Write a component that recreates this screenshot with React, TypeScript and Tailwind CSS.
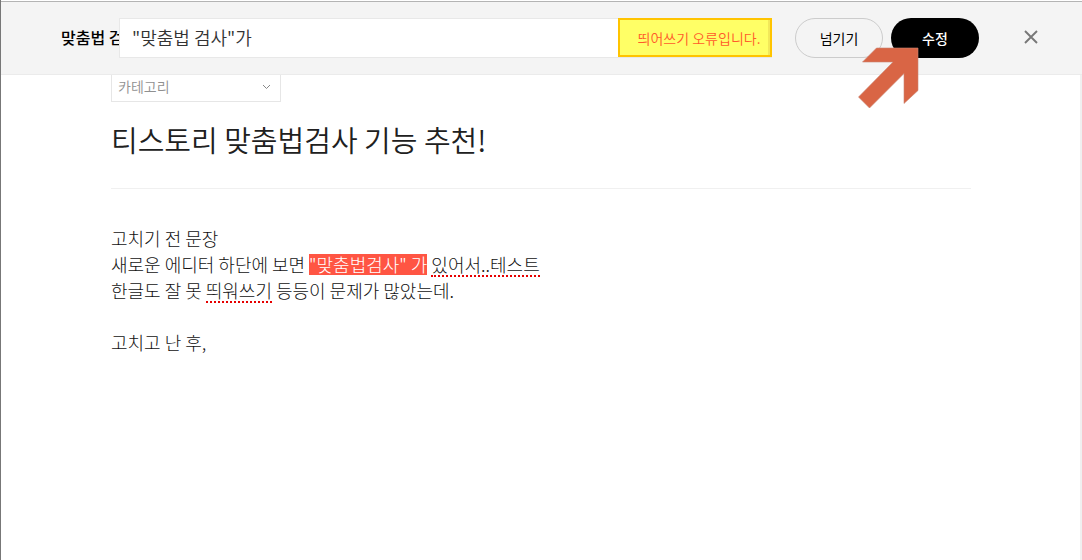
import React from "react";

function CloseIcon() {
  return (
    <svg width="14" height="14" viewBox="0 0 14 14" fill="none" aria-hidden="true">
      <path d="M1 1L13 13M13 1L1 13" stroke="#777" strokeWidth="1.9" />
    </svg>
  );
}

function PointerArrow() {
  return (
    <svg
      className="pointer-events-none absolute -left-[34px] top-[29px]"
      width="63"
      height="63"
      viewBox="0 0 63 63"
      aria-hidden="true"
    >
      <path
        d="M19.5 1H61V43.5L47 56.5V26.5L12.5 61L1.5 50L36 15H5.5Z"
        fill="#d96545"
        stroke="#c98472"
        strokeWidth="0.6"
      />
    </svg>
  );
}

function SpellBar() {
  return (
    <header className="flex h-[73px] items-start border-b border-[#ebebeb] bg-[#f4f4f4] pl-[60px] pr-11 pt-4">
      <label
        htmlFor="replacement"
        className="w-[58px] shrink-0 whitespace-nowrap text-base leading-[38px] font-medium text-black"
      >
        맞춤법 검사
      </label>
      <div className="relative flex h-10 min-w-0 flex-1 border border-[#e8e8e8] border-r-0 bg-white">
        <input
          id="replacement"
          type="text"
          defaultValue={'"맞춤법 검사"가'}
          className="min-w-0 flex-1 bg-transparent px-3 pb-0.5 text-[18px] font-[350] text-[#333] outline-none"
        />
        <p className="-mt-px flex h-[39px] w-[154px] shrink-0 items-center justify-center border-2 border-[#ffc400] bg-[#ffff66] pl-3 pr-1 text-sm font-[350] whitespace-nowrap text-[#ff5a2a] shadow-[inset_-2px_0_0_#f2e85a]">
          띄어쓰기 오류입니다.
        </p>
      </div>
      <div className="ml-[23px] flex shrink-0 gap-2">
        <button
          type="button"
          className="h-10 w-[88px] rounded-full border border-[#ccc] text-sm text-black"
        >
          넘기기
        </button>
        <div className="relative">
          <button
            type="button"
            className="h-10 w-[88px] rounded-full bg-black text-sm font-medium text-white"
          >
            수정
          </button>
          <PointerArrow />
        </div>
      </div>
      <button type="button" aria-label="닫기" className="ml-[45px] mt-3 shrink-0">
        <CloseIcon />
      </button>
    </header>
  );
}

function CategorySelect() {
  return (
    <div className="relative w-[170px]">
      <select
        aria-label="카테고리"
        className="block h-[27px] w-full appearance-none border border-t-0 border-[#e6e6e6] bg-white px-1.5 pb-1 text-sm font-[350] text-[#909090] outline-none"
      >
        <option>카테고리</option>
      </select>
      <svg
        className="pointer-events-none absolute right-2.5 top-[9px]"
        width="9"
        height="6"
        viewBox="0 0 9 6"
        fill="none"
        aria-hidden="true"
      >
        <path d="M1 1L4.5 4.5L8 1" stroke="#888" />
      </svg>
    </div>
  );
}

const misspelled = "inline-block border-b-2 border-dotted border-[#e60000] leading-[22px]";

export default function App() {
  return (
    <div className="flex min-h-screen flex-col border-l border-[#777] bg-white pt-px font-['Noto_Sans_CJK_KR',sans-serif]">
      <div className="h-px bg-[#b4b4b4]" />
      <SpellBar />
      <main className="flex-1 border-r-2 border-[#f0f0f0] pl-px">
        <div className="mx-auto max-w-[860px]">
          <CategorySelect />
          <h1 className="border-b border-[#f0f0f0] pt-4 pb-[27px] text-[29px] leading-[43px] font-[350] text-[#202020]">
            티스토리 맞춤법검사 기능 추천!
          </h1>
          <div className="pt-9 text-[18px] leading-[26px] font-light text-[#111]">
            <p>고치기 전 문장</p>
            <p>
              새로운 에디터 하단에 보면{" "}
              <mark className="inline-block h-[21px] bg-[#ff5543] leading-[21px] text-white">
                "맞춤법검사" 가
              </mark>{" "}
              <span className={misspelled}>있어서..테스트</span>
            </p>
            <p>
              한글도 잘 못 <span className={misspelled}>띄워쓰기</span> 등등이 문제가 많았는데.
            </p>
            <p>&nbsp;</p>
            <p>고치고 난 후,</p>
          </div>
        </div>
      </main>
    </div>
  );
}
